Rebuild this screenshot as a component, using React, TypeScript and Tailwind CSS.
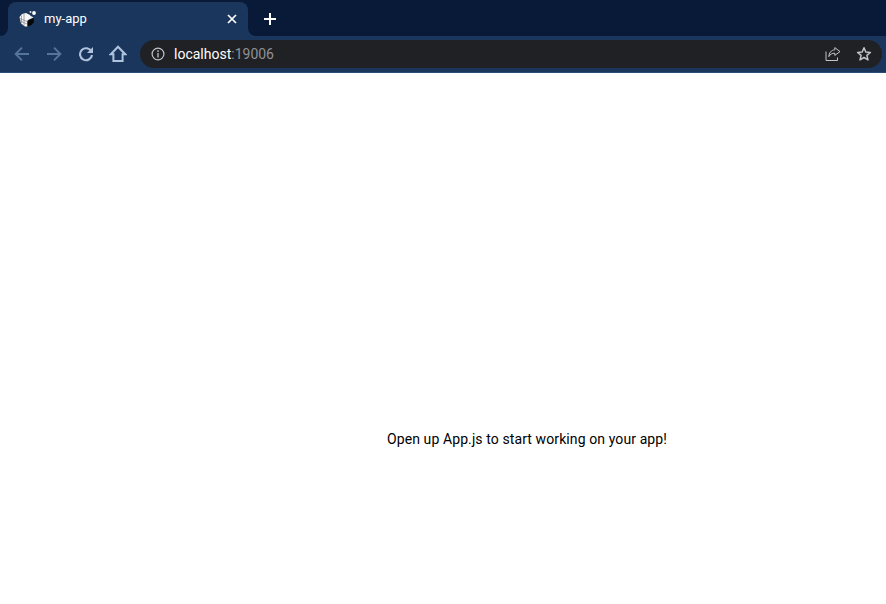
import React from "react";

function Logo() {
  return (
    <svg width="18" height="18" viewBox="0 0 18 18" className="shrink-0">
      <path d="M0.5 7 L3 4 L7 3 L11 5 L11.5 8.5 L8.5 10.5 L8.5 16.5 L6 16.5 L2 13.5 Z" fill="#f6f6f6" />
      <path d="M2.5 5.5 L2.5 13.5 M5 4 L5 15.5 M1 8.5 L8 11.5 M1.5 11 L8 14" stroke="#8e8e8e" strokeWidth="0.8" fill="none" />
      <path d="M8.5 11 L14.5 8 L15 12 L12.5 15 L8.5 16.5 Z" fill="#060606" />
      <path d="M11 5.5 L14.5 7.4 L11 9 Z" fill="#efefef" />
      <circle cx="15" cy="3" r="1.9" fill="#ffffff" />
      <circle cx="11.5" cy="2" r="1" fill="#dddddd" />
    </svg>
  );
}

function Arrow({ flip }: { flip?: boolean }) {
  return (
    <svg width="16" height="16" viewBox="0 0 16 16" fill="none" className={flip ? "rotate-180" : ""}>
      <path d="M15 8 H2 M8 1.6 L1.6 8 L8 14.4" stroke="#55749c" strokeWidth="1.9" />
    </svg>
  );
}

export default function App() {
  return (
    <div className="flex h-[604px] w-[886px] flex-col overflow-hidden bg-white font-['Roboto','Liberation_Sans',sans-serif]">
      <div className="flex h-9 bg-[#1a365d]">
        <div className="w-2 rounded-br-lg bg-[#081a38]" />
        <div className="w-[240px] bg-[#081a38] pt-[2px]">
          <div className="flex h-full items-center rounded-t-lg bg-[#1a365d] pl-[11px] pr-[11px]">
            <Logo />
            <span className="ml-[7px] flex-1 text-[13px] text-white">my-app</span>
            <svg width="10" height="10" viewBox="0 0 10 10" fill="none">
              <path d="M1 1 L9 9 M9 1 L1 9" stroke="#ffffff" strokeWidth="1.7" />
            </svg>
          </div>
        </div>
        <div className="flex flex-1 items-center rounded-bl-lg bg-[#081a38] pl-[15px] pt-[2px]">
          <svg width="14" height="14" viewBox="0 0 14 14" fill="none">
            <path d="M7 1 V13 M1 7 H13" stroke="#ffffff" strokeWidth="2" />
          </svg>
        </div>
      </div>
      <div className="flex h-[37px] items-center border-b border-[#2a4a78] bg-[#1a365d] pb-[1px] pl-[14px] pr-1">
        <Arrow />
        <span className="ml-4">
          <Arrow flip />
        </span>
        <svg width="16" height="16" viewBox="0 0 16 16" fill="none" className="ml-4">
          <path d="M13.4 5.5 A6 6 0 1 0 14 9" stroke="#b0c3dd" strokeWidth="2.1" />
          <path d="M15 1 V7 H9 Z" fill="#b0c3dd" />
        </svg>
        <svg width="18" height="18" viewBox="0 0 18 18" fill="none" className="ml-[15px]">
          <path d="M1.8 9.2 L9 1.8 L16.2 9.2 H13.6 V16 H4.4 V9.2 Z" stroke="#b0c3dd" strokeWidth="2" strokeLinejoin="miter" />
        </svg>
        <div className="ml-[13px] flex h-7 flex-1 items-center rounded-full bg-[#202124] pl-[11px] pr-[10px]">
          <svg width="14" height="14" viewBox="0 0 14 14" fill="none">
            <circle cx="7" cy="7" r="5.9" stroke="#c2c4c7" strokeWidth="1.2" />
            <path d="M7 6 V10.4" stroke="#c2c4c7" strokeWidth="1.3" />
            <circle cx="7" cy="4.1" r="0.9" fill="#c2c4c7" />
          </svg>
          <span className="ml-[9px] flex-1 text-sm">
            <span className="text-white">localhost</span>
            <span className="text-[#8f9296]">:19006</span>
          </span>
          <svg width="16" height="16" viewBox="0 0 16 16" fill="none" className="translate-x-[1px]">
            <path d="M1 5.5 V14.5 H12.5 V11.5" stroke="#c2c4c7" strokeWidth="1" />
            <path d="M9.8 1.6 L15 5.6 L9.8 9.4 V7.2 C7 7.2 5.2 8.2 3.8 10.6 C4 7 6.2 4 9.8 3.8 Z" stroke="#c2c4c7" strokeWidth="1" strokeLinejoin="round" />
          </svg>
          <svg width="16" height="16" viewBox="0 0 16 16" fill="none" className="ml-4">
            <path d="M8 1.8 L9.8 6 L14.4 6.4 L10.9 9.4 L12 13.9 L8 11.5 L4 13.9 L5.1 9.4 L1.6 6.4 L6.2 6 Z" stroke="#c2c4c7" strokeWidth="1.5" strokeLinejoin="round" />
          </svg>
        </div>
      </div>
      <main className="flex flex-1 items-center justify-center pl-[168px] pt-[200px]">
        <p className="text-sm tracking-[0.1px] text-black">Open up App.js to start working on your app!</p>
      </main>
    </div>
  );
}
